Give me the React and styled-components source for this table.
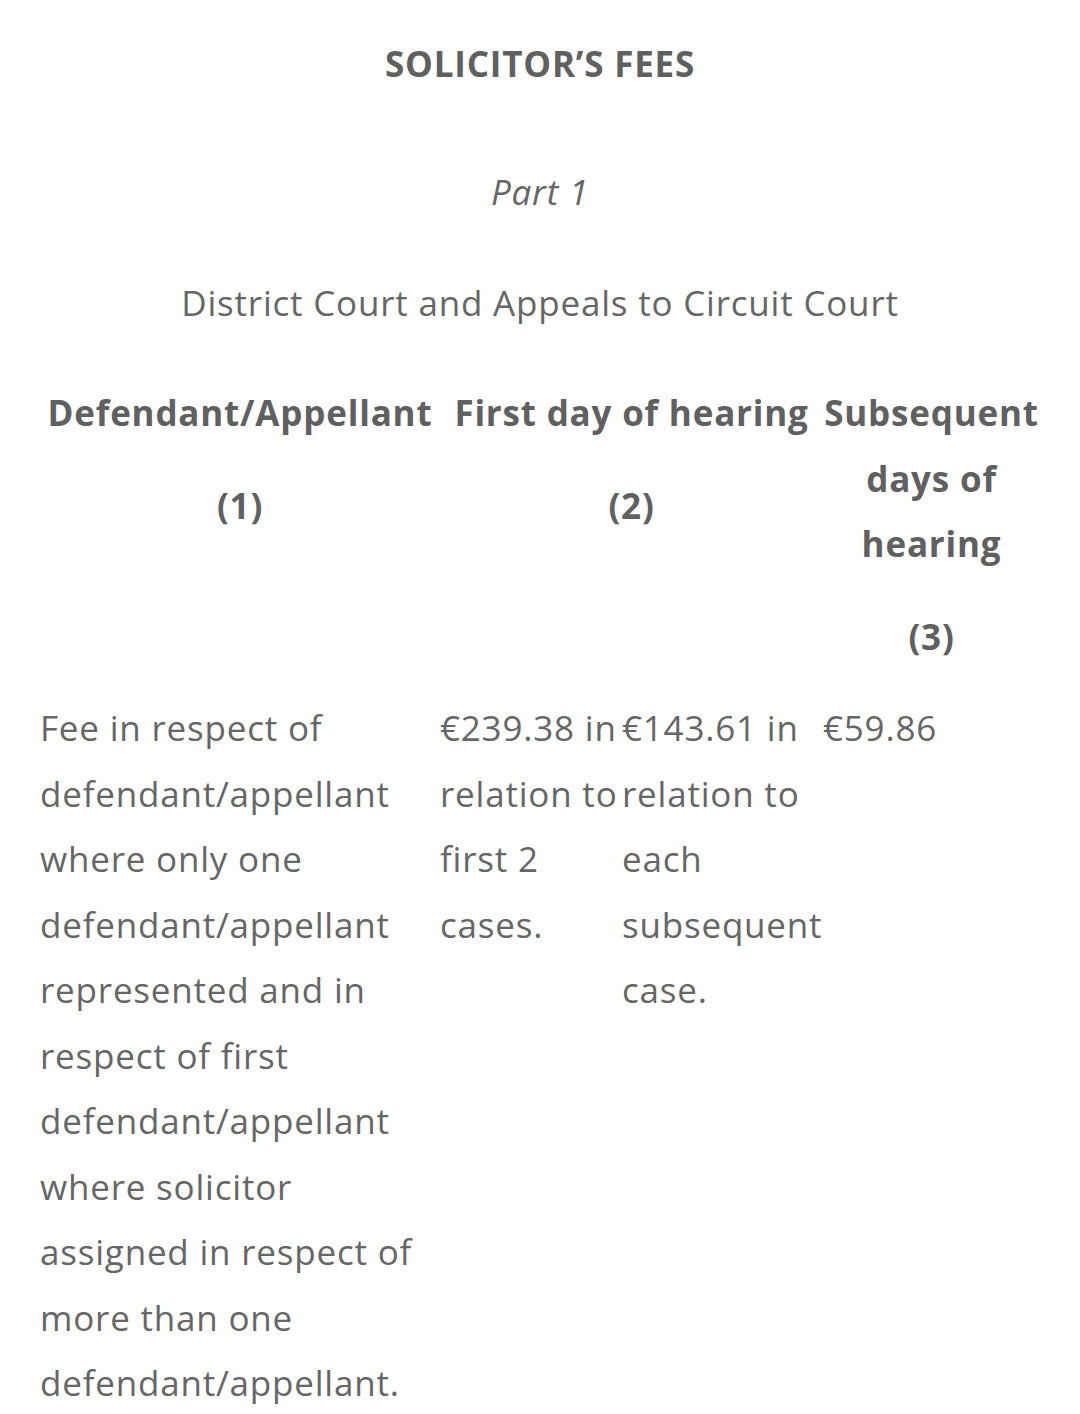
import React from 'react'
import styled, { createGlobalStyle } from 'styled-components'

const GlobalStyle = createGlobalStyle`
  html, body {
    margin: 0;
    padding: 0;
    background: #ffffff;
  }
  body {
    font-family: "Open Sans", "Liberation Sans", sans-serif;
    color: #666666;
    letter-spacing: 0.8px;
  }
`

const Page = styled.div`
  width: 1080px;
  padding: 31px 40px 0 40px;
  box-sizing: border-box;
`

const Title = styled.h1`
  margin: 0;
  font-size: 35px;
  line-height: 66px;
  font-weight: 700;
  text-align: center;
  color: #606060;
`

const PartLabel = styled.p`
  margin: 62px 0 0 0;
  font-size: 35px;
  line-height: 66px;
  font-style: italic;
  text-align: center;
`

const Subtitle = styled.p`
  margin: 45px 0 0 0;
  font-size: 35px;
  line-height: 66px;
  text-align: center;
`

const FeeTable = styled.div`
  margin-top: 44px;
  display: grid;
  grid-template-columns: 400px 182px 201px 217px;
  align-items: start;
`

const HeadCell = styled.div`
  grid-column: ${(p) => p.span || 'auto'};
  text-align: center;
  font-weight: 700;
  font-size: 35px;
  line-height: 65.5px;
  color: #606060;
`

const HeadLine = styled.p`
  margin: 0 0 ${(p) => p.gap || 28}px 0;
`

const Cell = styled.div`
  font-size: 35px;
  line-height: 65.5px;
  padding-right: ${(p) => p.pad || 0}px;
  text-align: left;
`

const headers = [
  { title: 'Defendant/Appellant', num: '(1)', span: 'span 1' },
  { title: 'First day of hearing', num: '(2)', span: 'span 2' },
  { title: 'Subsequent days of hearing', num: '(3)', span: 'span 1' },
]

const row = [
  {
    text: 'Fee in respect of defendant/appellant where only one defendant/appellant represented and in respect of first defendant/appellant where solicitor assigned in respect of more than one defendant/appellant.',
    pad: 10,
  },
  { text: '€239.38 in relation to first 2 cases.', pad: 0 },
  { text: '€143.61 in relation to each subsequent case.', pad: 0 },
  { text: '€59.86', pad: 0 },
]

export default function App() {
  return (
    <>
      <GlobalStyle />
      <Page>
        <Title>SOLICITOR’S FEES</Title>
        <PartLabel>Part 1</PartLabel>
        <Subtitle>District Court and Appeals to Circuit Court</Subtitle>
        <FeeTable>
          {headers.map((h) => (
            <HeadCell key={h.num} span={h.span}>
              <HeadLine gap={27}>{h.title}</HeadLine>
              <HeadLine gap={26}>{h.num}</HeadLine>
            </HeadCell>
          ))}
          {row.map((c, i) => (
            <Cell key={i} pad={c.pad}>{c.text}</Cell>
          ))}
        </FeeTable>
      </Page>
    </>
  )
}
